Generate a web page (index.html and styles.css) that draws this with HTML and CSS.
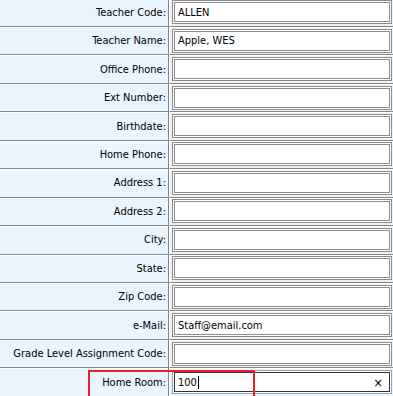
FILE: index.html
```html
<!DOCTYPE html>
<html>
<head>
<meta charset="utf-8">
<link rel="stylesheet" href="styles.css">
</head>
<body>
<div class="page">
  <div class="form">
    <div class="label">Teacher Code:</div><div class="value"><div class="field">ALLEN</div></div>
    <div class="label">Teacher Name:</div><div class="value"><div class="field">Apple, WES</div></div>
    <div class="label">Office Phone:</div><div class="value"><div class="field"></div></div>
    <div class="label">Ext Number:</div><div class="value"><div class="field"></div></div>
    <div class="label">Birthdate:</div><div class="value"><div class="field"></div></div>
    <div class="label">Home Phone:</div><div class="value"><div class="field"></div></div>
    <div class="label">Address 1:</div><div class="value"><div class="field"></div></div>
    <div class="label">Address 2:</div><div class="value"><div class="field"></div></div>
    <div class="label">City:</div><div class="value"><div class="field"></div></div>
    <div class="label">State:</div><div class="value"><div class="field"></div></div>
    <div class="label">Zip Code:</div><div class="value"><div class="field"></div></div>
    <div class="label">e-Mail:</div><div class="value"><div class="field">Staff@email.com</div></div>
    <div class="label">Grade Level Assignment Code:</div><div class="value"><div class="field"></div></div>
    <div class="label">Home Room:</div><div class="value"><div class="field focused"><span class="typed">100</span><span class="caret"></span><span class="clear">×</span></div></div>
  </div>
  <div class="highlight"></div>
</div>
</body>
</html>
```
FILE: styles.css
```css
html, body {
  margin: 0;
  padding: 0;
  background: #eaf4fd;
}
.page {
  position: relative;
  width: 393px;
  height: 396px;
  overflow: hidden;
  font-family: "DejaVu Sans Condensed", "Liberation Sans", sans-serif;
  font-size: 11px;
  color: #000000;
}
.form {
  display: grid;
  grid-template-columns: 169px 224px;
  grid-auto-rows: 28.46px;
  margin-top: -1.5px;
}
.label {
  background: #eaf4fd;
  border-bottom: 1px solid #858585;
  border-right: 1px solid #858585;
  box-shadow: inset 0 1px 0 #ffffff;
  display: flex;
  align-items: center;
  justify-content: flex-end;
  padding-right: 2px;
  white-space: nowrap;
}
.value {
  background: #eaf4fd;
  border-bottom: 1px solid #858585;
  border-left: 1px solid #ffffff;
  box-shadow: inset 0 1px 0 #ffffff;
  display: flex;
  align-items: center;
  padding: 0 3px 0 4px;
}
.field {
  flex: 1;
  height: 18px;
  background: #ffffff;
  border: 1px solid #8c8c8c;
  box-shadow: 0 0 0 1px #ffffff, 0 0 0 2px #8c8c8c;
  display: flex;
  align-items: center;
  padding-left: 3px;
}
.field.focused {
  border-color: #333333;
  box-shadow: 0 0 0 1px #ffffff, 0 0 0 2px #a0a0a0;
}
.typed {
  color: #000;
}
.caret {
  width: 1px;
  height: 13px;
  background: #000;
  margin-left: 1px;
}
.clear {
  margin-left: auto;
  margin-right: 6px;
  font-size: 13px;
  color: #000;
}
.highlight {
  position: absolute;
  left: 88px;
  top: 370px;
  width: 163px;
  height: 30px;
  border: 2px solid #e8202a;
}
```
